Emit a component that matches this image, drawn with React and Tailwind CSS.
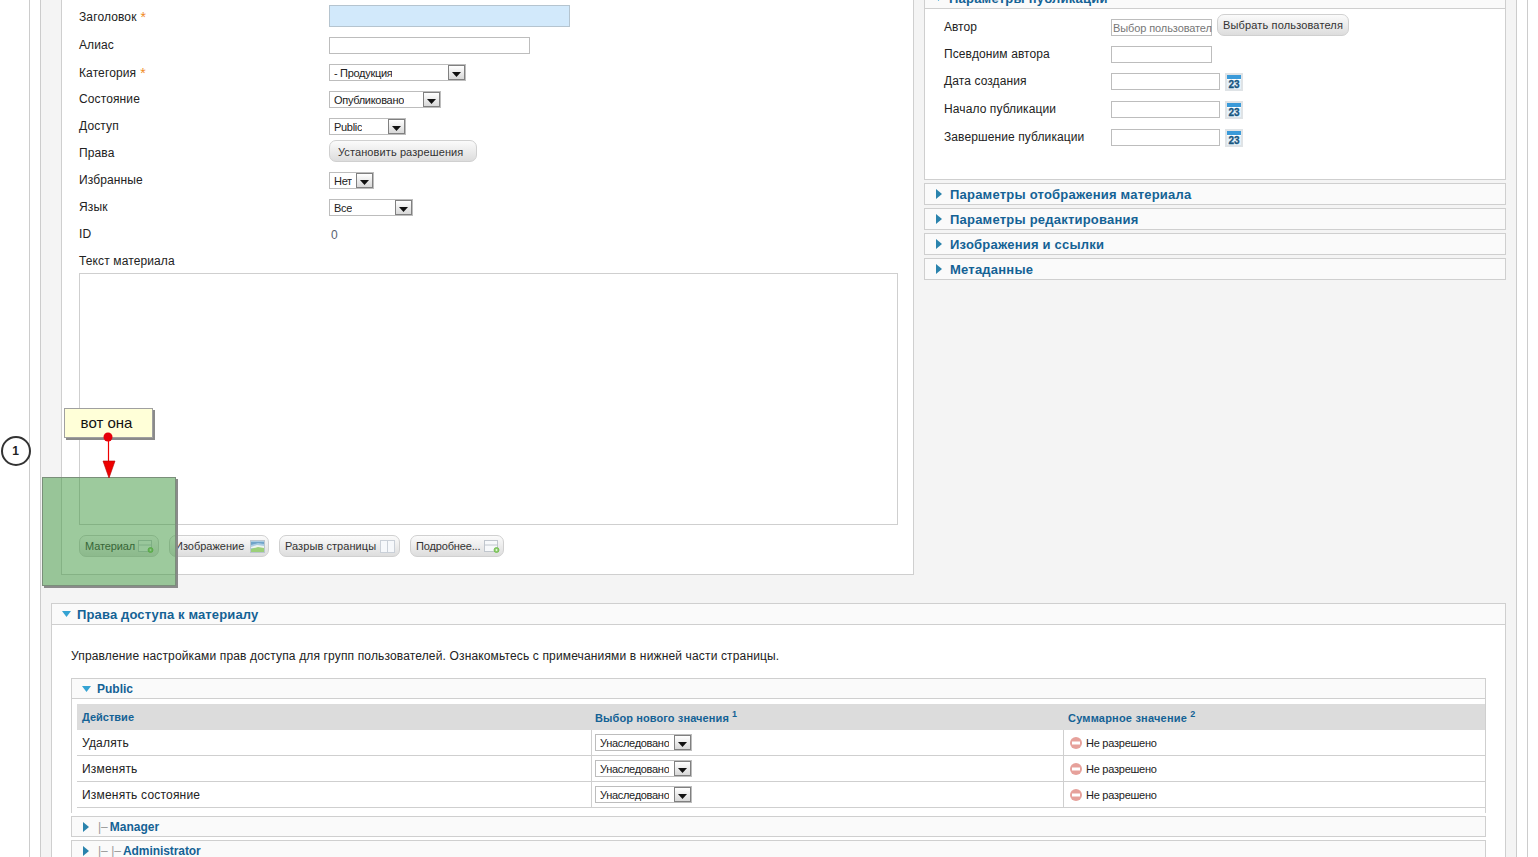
import React from "react";

function Select({ w, text, cls = "" }) {
  return (
    <div className={`flex h-[17px] shrink-0 items-stretch justify-between border border-[#bdbdbd] bg-white ${cls}`} style={{ width: w }}>
      <span className="truncate pl-1 text-[11px] leading-[17px] tracking-[-0.3px] text-[#222]">{text}</span>
      <span className="flex w-[17px] shrink-0 items-end justify-center border border-[#808080] bg-gradient-to-b from-white to-[#d8d8d8] pb-[2px]">
        <svg width="9" height="5" viewBox="0 0 9 5"><path d="M0 0h9L4.5 5z" fill="#111" /></svg>
      </span>
    </div>
  );
}

function Btn({ children, cls = "" }) {
  return (
    <div className={`flex h-[22px] shrink-0 items-center rounded-[7px] border border-[#d0d0d0] bg-gradient-to-b from-[#fbfbfb] to-[#dddddd] text-[11px] text-[#333] ${cls}`}>
      {children}
    </div>
  );
}

function DocIcon({ dot }) {
  return (
    <svg width="16" height="14" viewBox="0 0 16 14" className="shrink-0">
      <rect x="0.5" y="1.5" width="13" height="11" fill="#f7f9fb" stroke="#c0c6cd" />
      <path d="M1 6h12" stroke="#c0c6cd" />
      {dot && <circle cx="12.5" cy="11" r="2.5" fill="#8ccf6b" stroke="#6fb84e" strokeWidth="0.8" />}
      {dot && <circle cx="12.5" cy="11" r="0.9" fill="#e8f6df" />}
    </svg>
  );
}

function ImgIcon() {
  return (
    <svg width="15" height="13" viewBox="0 0 15 13" className="shrink-0">
      <rect x="0.5" y="0.5" width="14" height="12" fill="#a8cbe3" stroke="#bcc6ce" />
      <path d="M1 2h13v2L8 3 1 5z" fill="#6fa3c9" />
      <path d="M1 7l6-2 7 1v2H1z" fill="#eef3ee" />
      <path d="M1 9l7-2 6 1v4H1z" fill="#9ccf7a" />
    </svg>
  );
}

function BreakIcon() {
  return (
    <svg width="15" height="13" viewBox="0 0 15 13" className="shrink-0">
      <rect x="0.5" y="0.5" width="14" height="12" fill="#f6f8fb" stroke="#cad0d8" />
      <path d="M7.5 1v11" stroke="#cad0d8" />
    </svg>
  );
}

function CalIcon() {
  return (
    <svg width="18" height="18" viewBox="0 0 18 18" className="ml-[5px] shrink-0">
      <rect width="18" height="18" fill="#dfe3e6" />
      <rect x="2" y="2" width="14" height="14" fill="#e4f1fa" />
      <rect x="2" y="2" width="14" height="4" fill="#3a9ad9" />
      <path d="M2 6.5h14" stroke="#fff" />
      <text x="9" y="15" textAnchor="middle" fontSize="10" fontWeight="700" fill="#17557f" stroke="#17557f" strokeWidth="0.3" fontFamily="Liberation Sans, sans-serif">23</text>
    </svg>
  );
}

function ArrowRight({ cls = "" }) {
  return (
    <svg width="6" height="10" viewBox="0 0 6 10" className={`shrink-0 ${cls}`}><path d="M0 0l6 5-6 5z" fill="#2a83ad" /></svg>
  );
}

function ArrowDown({ cls = "" }) {
  return (
    <svg width="9" height="6" viewBox="0 0 9 6" className={`shrink-0 ${cls}`}><path d="M0 0h9L4.5 6z" fill="#35a3d3" /></svg>
  );
}

function Accordion({ title, cls = "" }) {
  return (
    <div className={`flex h-[22px] items-center border border-[#cfcfcf] bg-[#fafafa] pl-[11px] ${cls}`}>
      <ArrowRight />
      <span className="ml-[8px] pt-[2px] text-[13px] font-bold tracking-[0.22px] text-[#146295]">{title}</span>
    </div>
  );
}

function Row({ label, star, h, mt = "mt-[10px]", shift = "pb-[2px]", children }) {
  return (
    <div className={`flex items-center ${h} ${mt}`}>
      <div className={`w-[250px] shrink-0 text-[12px] tracking-[0.12px] text-[#222] ${shift}`}>
        {label}
        {star && <span className="relative top-[1px] ml-1 text-[14px] text-[#f08a1d]">*</span>}
      </div>
      {children}
    </div>
  );
}

function RightRow({ label, mt, children }) {
  return (
    <div className={`flex h-[17px] items-start ${mt}`}>
      <div className="w-[167px] shrink-0 text-[12px] leading-[17px] tracking-[0.1px] text-[#222]">{label}</div>
      {children}
    </div>
  );
}

function PermRow({ label }) {
  return (
    <div className="grid h-[26px] grid-cols-[514px_472px_1fr] grid-rows-[25px] border-b border-[#cfcfcf] bg-white">
      <div className="pl-[5px] text-[12px] leading-[27px] tracking-[0.2px] text-[#222]">{label}</div>
      <div className="flex items-center border-l border-[#cfcfcf] pl-[3px]">
        <Select w="97px" text="Унаследовано" />
      </div>
      <div className="flex items-center border-l border-[#cfcfcf] pl-[6px]">
        <svg width="12" height="12" viewBox="0 0 12 12" className="shrink-0">
          <circle cx="6" cy="6" r="6" fill="#e6a19b" />
          <rect x="2" y="4.5" width="8" height="3" fill="#fff" />
        </svg>
        <span className="ml-[4px] pt-[1px] text-[11px] tracking-[-0.25px] text-[#222]">Не разрешено</span>
      </div>
    </div>
  );
}

export default function App() {
  return (
    <div className="relative h-[857px] w-[1538px] overflow-hidden bg-white font-['Liberation_Sans',Arial,sans-serif]">
      <div className="ml-[29px] h-full w-[1499px] border-x border-[#cccccc] px-[10px]">
        <div className="h-full overflow-hidden border-x border-[#cccccc] bg-[#f4f4f4] pl-[10px] pr-[10px]">
          <div className="-mt-[20px] flex items-start gap-[10px] pl-[10px]">
            {/* left column */}
            <div className="h-[595px] w-[853px] shrink-0 border border-[#cfcfcf] bg-white pl-[17px] pt-[24px]">
              <Row label="Заголовок" star h="h-[22px]" mt="" shift="pt-[1px]">
                <div className="h-[22px] w-[241px] border border-[#b5c4cf] bg-[#d2e9fb]" />
              </Row>
              <Row label="Алиас" h="h-[17px]">
                <div className="h-[17px] w-[201px] border border-[#bdbdbd] bg-white" />
              </Row>
              <Row label="Категория" star h="h-[17px]" shift=""><Select w="137px" text="- Продукция" /></Row>
              <Row label="Состояние" h="h-[17px]"><Select w="112px" text="Опубликовано" /></Row>
              <Row label="Доступ" h="h-[17px]"><Select w="77px" text="Public" /></Row>
              <Row label="Права" h="h-[22px]" mt="mt-[5px]" shift="pt-[4px]">
                <Btn cls="w-[148px] pl-[8px] pt-[2px] tracking-[0.1px]">Установить разрешения</Btn>
              </Row>
              <Row label="Избранные" h="h-[17px]"><Select w="45px" text="Нет" /></Row>
              <Row label="Язык" h="h-[17px]"><Select w="84px" text="Все" /></Row>
              <Row label="ID" h="h-[17px]">
                <span className="pl-[2px] text-[12px] text-[#5a6270]">0</span>
              </Row>
              <Row label="Текст материала" h="h-[17px]" />
              <div className="mt-[3px] h-[252px] w-[819px] border border-[#cfcfcf] bg-white" />
              <div className="mt-[10px] flex gap-[10px]">
                <Btn cls="w-[80px] justify-between pl-[5px] pr-[4px]"><span className="tracking-[-0.1px]">Материал</span><DocIcon dot /></Btn>
                <Btn cls="w-[100px] justify-between pl-[5px] pr-[3px]">Изображение<ImgIcon /></Btn>
                <Btn cls="w-[121px] justify-between pl-[5px] pr-[4px]"><span className="tracking-[0.07px]">Разрыв страницы</span><BreakIcon /></Btn>
                <Btn cls="w-[94px] justify-between pl-[5px] pr-[3px]"><span className="tracking-[-0.15px]">Подробнее...</span><DocIcon dot /></Btn>
              </div>
            </div>

            {/* right column */}
            <div className="mt-[7px] w-[582px] shrink-0">
              <div className="flex h-[22px] items-center border border-[#cfcfcf] bg-[#fafafa] pl-[9px]">
                <ArrowDown />
                <span className="ml-[6px] pt-[2px] text-[13px] font-bold tracking-[0.22px] text-[#146295]">Параметры публикации</span>
              </div>
              <div className="h-[171px] border-x border-b border-[#cfcfcf] bg-white pl-[19px] pt-[5px]">
                <div className="flex h-[22px] items-end">
                  <div className="w-[167px] shrink-0 self-center pt-[3px] text-[12px] text-[#222]">Автор</div>
                  <div className="h-[17px] w-[101px] whitespace-nowrap border border-[#bdbdbd] pl-[1px] text-[11px] leading-[17px] tracking-[-0.1px] text-[#777]">Выбор пользовател</div>
                  <Btn cls="ml-[5px] w-[132px] pl-[5px] tracking-[0.15px]">Выбрать пользователя</Btn>
                </div>
                <RightRow label="Псевдоним автора" mt="mt-[10px]">
                  <div className="h-[17px] w-[101px] border border-[#bdbdbd]" />
                </RightRow>
                <RightRow label="Дата создания" mt="mt-[10px]">
                  <div className="h-[17px] w-[109px] border border-[#bdbdbd]" /><CalIcon />
                </RightRow>
                <RightRow label="Начало публикации" mt="mt-[11px]">
                  <div className="h-[17px] w-[109px] border border-[#bdbdbd]" /><CalIcon />
                </RightRow>
                <RightRow label="Завершение публикации" mt="mt-[11px]">
                  <div className="h-[17px] w-[109px] border border-[#bdbdbd]" /><CalIcon />
                </RightRow>
              </div>
              <Accordion cls="mt-[3px]" title="Параметры отображения материала" />
              <Accordion cls="mt-[3px]" title="Параметры редактирования" />
              <Accordion cls="mt-[3px]" title="Изображения и ссылки" />
              <Accordion cls="mt-[3px]" title="Метаданные" />
            </div>
          </div>

          {/* permissions */}
          <div className="mt-[28px] border-x border-[#cfcfcf] bg-white">
            <div className="-mx-px flex h-[22px] items-center border border-[#cfcfcf] bg-[#fafafa] pl-[10px]">
              <ArrowDown />
              <span className="ml-[6px] pt-[2px] text-[13px] font-bold tracking-[0.14px] text-[#146295]">Права доступа к материалу</span>
            </div>
            <div className="px-[19px]">
              <p className="mt-[24px] whitespace-nowrap text-[12px] leading-[14px] tracking-[0.15px] text-[#222]">
                Управление настройками прав доступа для групп пользователей. Ознакомьтесь с примечаниями в нижней части страницы.
              </p>
              <div className="mt-[15px] flex h-[21px] items-center border border-[#cfcfcf] bg-[#fafafa] pl-[10px]">
                <ArrowDown />
                <span className="ml-[6px] text-[12px] font-bold text-[#146295]">Public</span>
              </div>
              <div className="border-x border-[#cfcfcf] pb-[5px] pl-[5px] pt-[5px]">
                <div className="grid h-[26px] grid-cols-[514px_472px_1fr] items-center bg-[#dcdcdc] text-[11px] font-bold text-[#146295]">
                  <div className="pl-[5px]">Действие</div>
                  <div className="pl-[4px] pt-[2px] tracking-[0.1px]">Выбор нового значения <sup className="text-[9px]">1</sup></div>
                  <div className="pl-[5px] pt-[2px] tracking-[0.2px]">Суммарное значение <sup className="text-[9px]">2</sup></div>
                </div>
                <PermRow label="Удалять" />
                <PermRow label="Изменять" />
                <PermRow label="Изменять состояние" />
              </div>
              <div className="mt-[3px] flex h-[21px] items-center border border-[#cfcfcf] bg-[#fafafa] pl-[11px]">
                <ArrowRight />
                <span className="ml-[9px] text-[12px] text-[#999]">|–</span>
                <span className="ml-[2px] text-[12px] font-bold text-[#146295]">Manager</span>
              </div>
              <div className="mt-[3px] flex h-[21px] items-center border border-[#cfcfcf] bg-[#fafafa] pl-[11px]">
                <ArrowRight />
                <span className="ml-[9px] text-[12px] text-[#999]">|– |–</span>
                <span className="ml-[2px] text-[12px] font-bold tracking-[-0.07px] text-[#146295]">Administrator</span>
              </div>
            </div>
          </div>
        </div>
      </div>

      {/* annotation overlays */}
      <div className="absolute left-[42px] top-[477px] h-[109px] w-[134px] border border-[#7a8f7a] bg-[#3c963c]/50 shadow-[2px_2px_0_#8a8a8a]" />
      <div className="absolute left-[64px] top-[408px] flex h-[30px] w-[89px] items-center justify-center border border-[#a0a0a0] bg-[#ffffd8] pr-[4px] text-[15px] text-[#111] shadow-[2px_2px_0_#8a8a8a]">вот она</div>
      <svg className="absolute left-[98px] top-[428px]" width="24" height="52" viewBox="0 0 24 52">
        <circle cx="10" cy="9" r="4.5" fill="#e5000a" />
        <path d="M10.5 9v25" stroke="#ee0000" strokeWidth="1.2" />
        <path d="M5 33h12l-6 17z" fill="#ee0000" stroke="#b00000" strokeWidth="0.6" />
      </svg>
      <div className="absolute left-[1px] top-[436px] flex h-[30px] w-[30px] items-center justify-center rounded-full border-2 border-[#333] bg-white pr-[1px] text-[12px] font-bold text-[#222]">1</div>
    </div>
  );
}
